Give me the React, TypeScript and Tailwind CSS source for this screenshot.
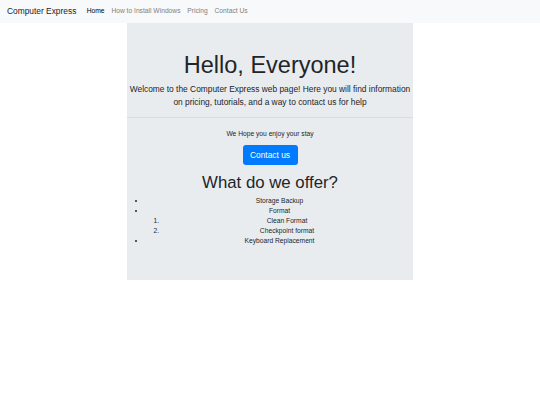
import React from 'react';

const links = ['How to Install Windows', 'Pricing', 'Contact Us'];

export default function App() {
  return (
    <div className="min-h-[405px] bg-white text-[#212529]" style={{ fontFamily: '"Liberation Sans", Arial, sans-serif' }}>
      <nav className="flex h-[23px] items-center bg-[#f8f9fa] px-[7px]">
        <span className="mr-[7px] text-[8.4px] leading-none">Computer Express</span>
        <span className="px-[3.4px] text-[6.7px] text-black">Home</span>
        {links.map((l) => (
          <span key={l} className="px-[3.4px] text-[6.7px] text-[#808080]">
            {l}
          </span>
        ))}
      </nav>
      <div className="mx-auto flex h-[257px] w-[286px] flex-col items-center bg-[#e9ecef] pt-[28px] text-center">
        <h1 className="text-[23.5px] leading-[28px] font-light">Hello, Everyone!</h1>
        <p className="mt-[4px] px-[1px] text-[8.4px] leading-[12.6px]">
          Welcome to the Computer Express web page! Here you will find information on pricing, tutorials, and a way to contact us for help
        </p>
        <hr className="mt-[9px] w-full border-t border-[#dadde0]" />
        <p className="mt-[11px] text-[6.7px] leading-[10px] text-[#212529]">We Hope you enjoy your stay</p>
        <button className="mt-[6px] h-[20px] w-[55px] rounded-[3px] bg-[#007bff] text-[8.4px] text-white">Contact us</button>
        <h2 className="mt-[8px] text-[16.8px] leading-[20px] text-[#212529]">What do we offer?</h2>
        <ul className="mt-[3px] w-full list-disc pl-[19px] text-[6.7px] leading-[10px] text-[#212529]">
          <li>Storage Backup</li>
          <li>
            Format
            <ol className="list-decimal pl-[15px]">
              <li>Clean Format</li>
              <li>Checkpoint format</li>
            </ol>
          </li>
          <li>Keyboard Replacement</li>
        </ul>
      </div>
    </div>
  );
}
